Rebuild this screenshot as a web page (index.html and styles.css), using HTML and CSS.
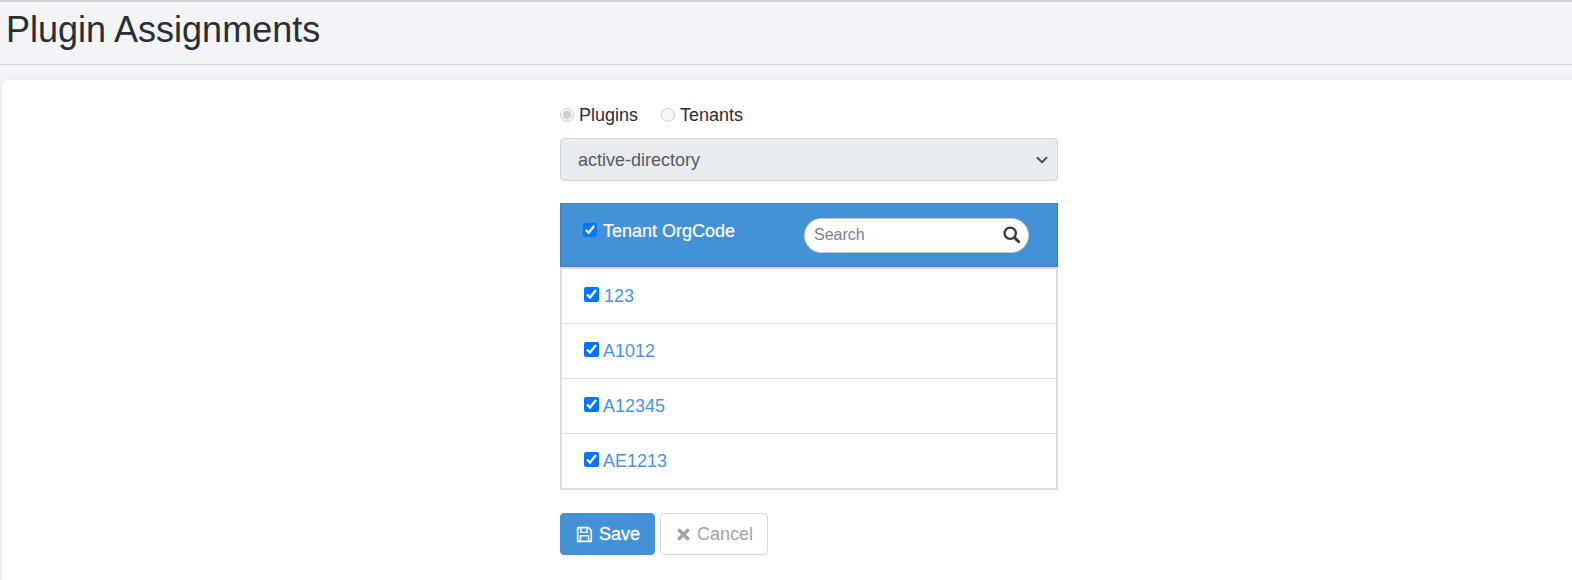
FILE: index.html
```html
<!DOCTYPE html>
<html lang="en">
<head>
  <meta charset="UTF-8">
  <meta name="viewport" content="width=device-width, initial-scale=1.0">
  <title>Plugin Assignments</title>
  <link rel="stylesheet" href="styles.css">
</head>
<body>
  <header class="page-header">
    <h1>Plugin Assignments</h1>
  </header>

  <main class="card">
    <div class="assign-form">
      <div class="radio-row">
        <label class="radio-item"><input type="radio" name="mode" checked disabled> Plugins</label>
        <label class="radio-item"><input type="radio" name="mode" disabled> Tenants</label>
      </div>

      <select class="plugin-select" disabled>
        <option>active-directory</option>
      </select>

      <div class="tenant-head">
        <label class="tenant-title"><input type="checkbox" checked> Tenant OrgCode</label>
        <div class="search-box">
          <input type="text" placeholder="Search">
          <svg class="search-icon" viewBox="0 0 16 16" width="17" height="17">
            <circle cx="6.8" cy="6.8" r="5.3" fill="none" stroke="#343a40" stroke-width="2.2"/>
            <path d="M10.8 10.8 L15 15" stroke="#343a40" stroke-width="2.8" stroke-linecap="round"/>
          </svg>
        </div>
      </div>

      <div class="tenant-list">
        <div class="tenant-row"><input type="checkbox" checked> <a class="tenant-first" href="#">123</a></div>
        <div class="tenant-row"><input type="checkbox" checked> <a href="#">A1012</a></div>
        <div class="tenant-row"><input type="checkbox" checked> <a href="#">A12345</a></div>
        <div class="tenant-row"><input type="checkbox" checked> <a href="#">AE1213</a></div>
      </div>

      <div class="actions">
        <button class="btn btn-save">
          <svg viewBox="0 0 16 16" width="17" height="17">
            <path d="M1.6 1.6 H11.6 L14.4 4.4 V14.4 H1.6 Z" fill="none" stroke="#fff" stroke-width="1.6" stroke-linejoin="round"/>
            <path d="M4.6 2 V6 H10.4 V2" fill="none" stroke="#fff" stroke-width="1.4"/>
            <path d="M4.2 14 V9.2 H11.8 V14" fill="none" stroke="#fff" stroke-width="1.4"/>
          </svg>
          Save
        </button>
        <button class="btn btn-cancel">
          <svg viewBox="0 0 14 14" width="15" height="15">
            <path d="M2.6 2.6 L11.4 11.4 M11.4 2.6 L2.6 11.4" stroke="#a3a3a3" stroke-width="3.8" stroke-linecap="round"/>
          </svg>
          Cancel
        </button>
      </div>
    </div>
  </main>
</body>
</html>
```

FILE: styles.css
```css
* {
  box-sizing: border-box;
}

body {
  margin: 0;
  font-family: "Liberation Sans", Arial, sans-serif;
  font-size: 18px;
  color: #212529;
  background-color: #f2f4f8;
}

.page-header {
  height: 65px;
  border-top: 2px solid #d2d4d8;
  border-bottom: 1px solid #d2d4d8;
  padding-left: 6px;
}

.page-header h1 {
  margin: 0;
  font-size: 36px;
  font-weight: 400;
  line-height: 56px;
  color: #2a2e33;
}

.card {
  margin: 15px 0 0 2px;
  height: 520px;
  background-color: white;
  border-radius: 6px 0 0 0;
  box-shadow: 0 0 2px #d5d7db;
}

.assign-form {
  width: 498px;
  margin-left: 558px;
  padding-top: 24px;
}

.radio-row {
  display: flex;
  gap: 23px;
  height: 21px;
  align-items: center;
  color: #2a2e33;
}

.radio-item {
  display: flex;
  align-items: center;
  gap: 5px;
  line-height: 20px;
}

.radio-item input {
  margin: 0;
  width: 14px;
  height: 14px;
}

.plugin-select {
  display: block;
  width: 100%;
  height: 43px;
  margin-top: 13px;
  padding: 0 36px 0 17px;
  font-family: inherit;
  font-size: 18px;
  color: #555b61;
  opacity: 1;
  background-color: #e9ecef;
  background-image: url("data:image/svg+xml,%3csvg xmlns='http://www.w3.org/2000/svg' viewBox='0 0 16 16'%3e%3cpath fill='none' stroke='%23495057' stroke-linecap='round' stroke-linejoin='round' stroke-width='2.6' d='M2 5l6 6 6-6'/%3e%3c/svg%3e");
  background-repeat: no-repeat;
  background-position: right 8px center;
  background-size: 14px 12px;
  border: 1px solid #ced4da;
  border-radius: 4px;
  appearance: none;
}

.tenant-head {
  display: flex;
  justify-content: space-between;
  height: 64px;
  margin-top: 22px;
  padding: 14px 28px 0 22px;
  background-color: #4391d6;
  border: 1px solid #3a7fbd;
}

.tenant-title {
  display: flex;
  align-items: flex-start;
  gap: 6px;
  height: 24px;
  padding-top: 3px;
  color: white;
  -webkit-text-stroke: 0.2px white;
}

.tenant-title input {
  margin: 2px 0 0;
  width: 14px;
  height: 14px;
}

.tenant-row input {
  margin: 0 0 4px;
  width: 15px;
  height: 15px;
}

.search-box {
  position: relative;
  width: 225px;
  height: 35px;
}

.search-box input {
  width: 100%;
  height: 100%;
  padding: 0 40px 2px 9px;
  font-family: inherit;
  font-size: 16px;
  background-color: white;
  border: 1px solid #c4cad1;
  border-radius: 18px;
  outline: none;
}

.search-box input::placeholder {
  color: #7b838a;
}

.search-icon {
  position: absolute;
  right: 9px;
  top: 8px;
}

.tenant-list {
  border: 2px solid #dedede;
  border-top-width: 2px;
}

.tenant-row {
  display: flex;
  align-items: center;
  gap: 4px;
  height: 55px;
  padding: 0 0 0 22px;
  border-bottom: 1px solid #dedede;
}

.tenant-row:last-child {
  height: 54px;
  border-bottom: none;
}

.tenant-row a {
  color: #4a93dc;
  text-decoration: none;
}

.tenant-row .tenant-first {
  margin-left: 1px;
}

.actions {
  display: flex;
  gap: 5px;
  margin-top: 23px;
}

.btn {
  display: flex;
  align-items: center;
  gap: 6px;
  height: 42px;
  padding: 0 14px 0 15px;
  font-family: inherit;
  font-size: 18px;
  border-radius: 4px;
  cursor: pointer;
}

.btn-save {
  width: 95px;
  color: white;
  -webkit-text-stroke: 0.3px white;
  background-color: #4391d6;
  border: 1px solid #4391d6;
}

.btn-cancel {
  width: 108px;
  gap: 7px;
  padding-left: 16px;
  color: #a3a3a3;
  background-color: white;
  border: 1px solid #d5d7db;
}
```
